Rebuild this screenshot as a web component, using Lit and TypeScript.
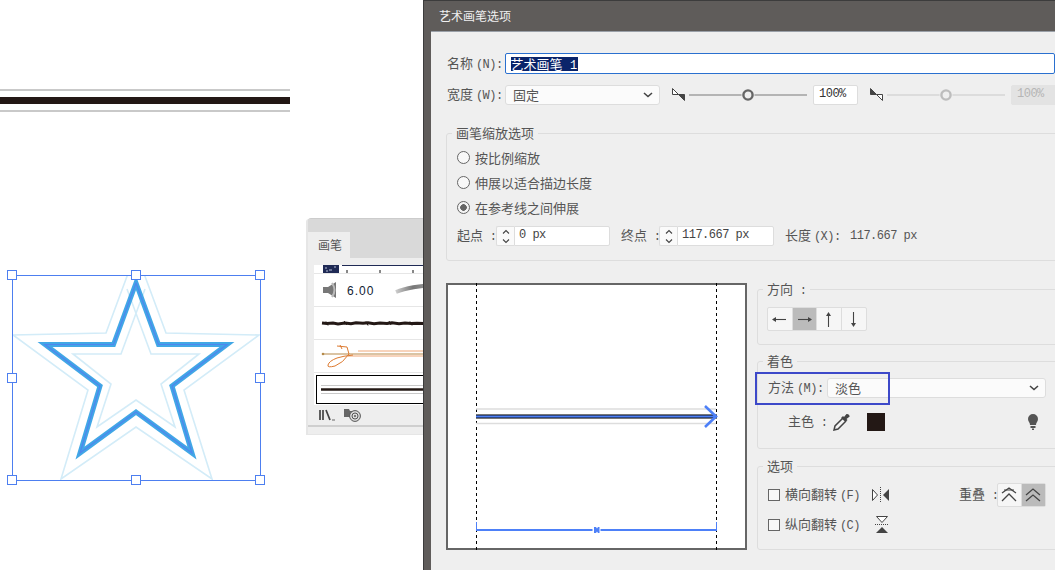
import { LitElement, html, css, svg } from 'lit';
import { customElement } from 'lit/decorators.js';

const chevron = html`<svg class="chev" width="10" height="6" viewBox="0 0 10 6"><path d="M1 1l4 3.5L9 1" fill="none" stroke="#444" stroke-width="1.6"/></svg>`;

const taper = (flip: boolean) => {
  const c = '#444';
  return html`<svg class="taper" width="13" height="14" viewBox="0 0 13 14">
    <path d="M.5.5v6h6z" fill=${flip ? c : '#fff'} stroke=${c}/>
    <path d="M6.5 6.5h6v6z" fill=${flip ? '#fff' : c} stroke=${c}/>
  </svg>`;
};

const slider = (line: string, knob: string) => html`<svg class="slider" width="118" height="14" viewBox="0 0 118 14">
  <path d="M0 7h118" stroke=${line} stroke-width="2"/>
  <circle cx="59" cy="7" r="6.5" fill="#efefef"/>
  <circle cx="59" cy="7" r="4.6" fill="#efefef" stroke=${knob} stroke-width="2.4"/>
</svg>`;

const spinner = html`<div class="spin"><svg width="10" height="17" viewBox="0 0 10 17">
  <path d="M2 5.500l3-3 3 3M2 11.500l3 3 3-3" fill="none" stroke="#444" stroke-width="1.1"/>
</svg></div>`;

// line + small filled head for the four direction buttons
const arrows = [
  ['M2 8.500h13', 'M1 8.500l4-2.500v5z'],
  ['M2 8.500h13', 'M16 8.500l-4-2.500v5z'],
  ['M8.500 3v13', 'M8.500 1l-2.500 4h5z'],
  ['M8.500 14V1', 'M8.500 16l-2.500-4h5z'],
];

const outerStar = 'M106 333L13 335L88 390L61 479L136 427L212 479L184 390L259 335L166 333L136 252Z';
const innerStar = 'M145 289L121 354H73L111 384L97 427L136 400L175 427L161 384L199 354H151L127 289';
const midStar = 'M136 283L113.500 344.500H45L100 386L80 453L136 412L192 453L172 386L227 344.500H158.500Z';
const handles = [[12, 275], [136, 275], [260, 275], [12, 378], [260, 378], [12, 480], [136, 480], [260, 480]];

@customElement('app-root')
export class AppRoot extends LitElement {
  static styles = css`
    :host {
      display: block;
      position: relative;
      width: 1055px;
      height: 570px;
      overflow: hidden;
      background: #fff;
      font-family: "Noto Sans CJK SC", "Liberation Sans", sans-serif;
      font-size: 13px;
      line-height: 16px;
      color: #555;
    }

    .art {
      position: absolute;
      inset: 0;
    }

    .lat {
      font-family: "Liberation Mono", monospace;
      font-size: 12px;
      letter-spacing: -0.5px;
    }

    /* brush panel */
    .panel {
      position: absolute;
      left: 308px;
      top: 218px;
      width: 130px;
      height: 216px;
      background: #eee;
      border-top: 1px solid #ccc;
      box-shadow: -2px 1px 0 #e6e6e6;
      box-sizing: border-box;
      display: flex;
      flex-direction: column;
      border-radius: 3px 0 0 0;
    }

    .panel-top {
      height: 13px;
      background: #d9d9d9;
    }

    .tabs {
      height: 26px;
      background: #d9d9d9;
      display: flex;
    }

    .tab {
      width: 42px;
      padding-left: 2px;
      box-sizing: border-box;
      background: #eee;
      font-size: 12px;
      color: #555;
      display: flex;
      align-items: center;
      justify-content: center;
    }

    .list {
      margin: 7px 0 0 6px;
      height: 140px;
      background: #fff;
      display: flex;
      flex-direction: column;
    }

    .brush {
      height: 33px;
      border-bottom: 1px solid #e6e6e6;
      box-sizing: border-box;
      flex: none;
    }

    .brush.first {
      height: 9px;
    }

    .brush.selected {
      height: 29px;
      margin: 2px 0 0 2px;
      border: 1.5px solid #000;
    }

    .brush svg {
      display: block;
    }

    .panel-foot {
      height: 22px;
      box-sizing: border-box;
      padding-left: 11px;
      display: flex;
      align-items: center;
      gap: 8px;
      border-bottom: 2px solid #cfcfcf;
    }

    .panel-foot svg {
      display: block;
    }

    /* dialog */
    .dialog {
      position: absolute;
      left: 423px;
      top: 0;
      width: 660px;
      height: 570px;
      background: #5f5c5a;
      border-top: 1px solid #3c3c3c;
      border-left: 1px solid #3c3c3c;
      box-sizing: border-box;
      display: flex;
      flex-direction: column;
    }

    .title {
      height: 30px;
      padding-left: 15px;
      display: flex;
      align-items: center;
      color: #f0f0f0;
      font-size: 12px;
    }

    .body {
      flex: 1;
      margin-left: 7px;
      padding: 21px 0 0 15px;
      background: #efefef;
      display: flex;
      flex-direction: column;
      border-top: 1px solid #9aa0a8;
    }

    .row {
      display: flex;
      align-items: center;
      white-space: nowrap;
    }

    .row > * {
      flex: none;
    }

    .row-label {
      width: 59px;
      white-space: pre;
      padding-left: 1px;
      box-sizing: border-box;
    }

    .name-field {
      flex: 1;
      height: 21px;
      margin-right: 28px;
      background: #fff;
      border: 1.5px solid #2a70cf;
      border-radius: 2px;
      box-sizing: border-box;
      padding-left: 4.500px;
      display: flex;
      align-items: center;
    }

    .name-field span.sel {
      background: #0a246a;
      color: #fff;
      height: 14px;
      line-height: 14px;
      white-space: pre;
    }

    .sel .lat {
      letter-spacing: 0.4px;
    }

    .select {
      height: 20px;
      background: #fbfbfb;
      border: 1px solid #ddd;
      border-radius: 3px;
      box-sizing: border-box;
      padding: 0 6px 0 7px;
      display: flex;
      align-items: center;
      justify-content: space-between;
    }

    .taper {
      margin-left: 12px;
    }

    .slider {
      margin-left: 4px;
    }

    .num {
      width: 45px;
      height: 20px;
      margin-left: 6px;
      background: #fff;
      border: 1px solid #ddd;
      border-radius: 2px;
      box-sizing: border-box;
      padding-left: 5px;
      line-height: 17px;
      color: #333;
    }

    .num.off {
      width: 60px;
      background: #e3e3e3;
      border-color: #e3e3e3;
      color: #b5b5b5;
    }

    .group {
      position: relative;
      border: 1px solid #ddd;
      border-radius: 3px;
      box-sizing: border-box;
      flex: none;
    }

    .legend {
      position: absolute;
      left: 5px;
      top: -10px;
      padding: 0 4px;
      background: #efefef;
      line-height: 18px;
    }

    .scale {
      width: 640px;
      height: 128px;
      margin-top: 28px;
      padding: 11px 0 0 10px;
    }

    .radio-row {
      height: 25px;
      display: flex;
      align-items: center;
      gap: 5px;
    }

    .radio {
      width: 13px;
      height: 13px;
      border: 1.5px solid #666;
      border-radius: 50%;
      background: #f8f8f8;
      box-sizing: border-box;
    }

    .radio.on {
      background: radial-gradient(circle, #666 0 3px, #f4f4f4 3.6px);
    }

    .range-row {
      height: 20px;
      margin-top: 6px;
    }

    .spin {
      width: 18px;
      height: 20px;
      background: #fafafa;
      border: 1px solid #ddd;
      border-right: 0;
      border-radius: 2px 0 0 2px;
      box-sizing: border-box;
      display: flex;
      align-items: center;
      justify-content: center;
    }

    .field {
      height: 20px;
      background: #fff;
      border: 1px solid #ddd;
      border-radius: 0 2px 2px 0;
      box-sizing: border-box;
      padding-left: 4px;
      line-height: 16px;
      color: #444;
    }

    .lower {
      display: grid;
      grid-template-columns: 301px 320px;
      column-gap: 10px;
      margin-top: 22px;
    }

    .preview {
      position: relative;
      height: 267px;
      background: #fff;
      border: 2px solid #666;
      box-sizing: border-box;
    }

    .preview svg {
      position: absolute;
      left: -2px;
      top: -2px;
    }

    .side {
      padding-top: 6px;
      display: flex;
      flex-direction: column;
    }

    .direction {
      height: 56px;
      padding: 17px 0 0 9px;
    }

    .seg {
      display: inline-flex;
      background: #f6f6f6;
      border: 1px solid #ddd;
      border-radius: 2px;
    }

    .seg-btn {
      width: 24.500px;
      height: 22px;
      box-sizing: border-box;
      border-right: 1px solid #ddd;
      display: flex;
      align-items: center;
      justify-content: center;
    }

    .seg-btn:last-child {
      border-right: 0;
    }

    .seg-btn.on {
      background: #bbb;
    }

    .seg.small .seg-btn {
      width: 23.500px;
    }

    .color {
      height: 88px;
      margin-top: 16px;
      padding: 16px 0 0 9px;
    }

    .method-label {
      width: 60px;
      padding-left: 1px;
      box-sizing: border-box;
      white-space: pre;
    }

    .main-row {
      margin-top: 15px;
      padding-left: 21px;
    }

    .main-row .swatch {
      width: 18px;
      height: 18px;
      margin-left: 17px;
      background: #231815;
    }

    .main-row .bulb {
      margin-left: 143px;
    }

    .options {
      height: 84px;
      margin-top: 17px;
      padding: 16px 0 0 10px;
    }

    .opt-row {
      height: 24px;
    }

    .opt-row.second {
      height: 20px;
      margin-top: 8px;
    }

    .check {
      width: 12px;
      height: 12px;
      margin-right: 5px;
      background: #f8f8f8;
      border: 1px solid #666;
      box-sizing: border-box;
    }

    .opt-label {
      width: 87px;
      white-space: pre;
    }

    .overlap-label {
      width: 38px;
      margin-left: 70px;
      white-space: pre;
    }

    .note {
      position: absolute;
      left: 755px;
      top: 372px;
      width: 135px;
      height: 33px;
      border: 2px solid #3d49c9;
      box-sizing: border-box;
    }
  `;

  private renderArt() {
    return html`<svg class="art" width="1055" height="570" viewBox="0 0 1055 570">
      <rect x="0" y="89" width="290" height="2" fill="#c9c9c9"/>
      <rect x="0" y="97" width="290" height="7" fill="#231815"/>
      <rect x="0" y="110" width="290" height="2" fill="#c9c9c9"/>
      <defs><clipPath id="box"><rect x="12" y="276" width="248" height="204"/></clipPath></defs>
      <g fill="none" clip-path="url(#box)" stroke-linejoin="miter" stroke-miterlimit="8">
        <path d=${outerStar} stroke="#d3ecf8" stroke-width="1.6"/>
        <path d=${innerStar} stroke="#d3ecf8" stroke-width="1.6"/>
        <path d=${midStar} stroke="#41a7e6" stroke-width="5"/>
        <path d=${midStar} stroke="#4f86ee" stroke-width="1.2"/>
      </g>
      <rect x="12.500" y="275.500" width="248" height="205" fill="none" stroke="#4d7ff0"/>
      ${handles.map(([x, y]) => svg`<rect x=${x - 4.5} y=${y - 4.5} width="9" height="9" fill="#fff" stroke="#4d7ff0"/>`)}
    </svg>`;
  }

  private renderPanel() {
    return html`<div class="panel">
      <div class="panel-top"></div>
      <div class="tabs"><div class="tab">画笔</div></div>
      <div class="list">
        <div class="brush first">
          <svg width="124" height="8" viewBox="0 0 124 8">
            <rect x="9" y="0" width="16" height="8" fill="#1f2a55"/>
            <path d="M11 3h2M15 5h3M20 2h2M12 6h2" stroke="#b9c0d8"/>
            <path d="M28 .5H124" stroke="#1f2a55"/>
            <path d="M33 5v3M66 5v3M99 5v3" stroke="#111"/>
          </svg>
        </div>
        <div class="brush">
          <svg width="124" height="32" viewBox="0 0 124 32">
            <path d="M9 13h5l8-5v16l-8-5H9z" fill="#777"/>
            <path d="M18 9q5 7 0 14" stroke="#bbb" fill="none" stroke-width="2"/>
            <text x="33" y="21" font-family="Liberation Sans" font-size="12" letter-spacing="1" fill="#123">6.00</text>
            <defs><linearGradient id="soft" x1="0" x2="1"><stop offset="0" stop-color="#ccc"/><stop offset="0.4" stop-color="#777"/><stop offset="1" stop-color="#aaa"/></linearGradient></defs>
            <path d="M82 18q14-6 42-7" stroke="url(#soft)" stroke-width="4" fill="none"/>
          </svg>
        </div>
        <div class="brush">
          <svg width="124" height="32" viewBox="0 0 124 32">
            <path d="M8 16l5 .5 6-.5 5 1 7-1 6 .8 5-1 7 .5 5-.6 6 1 6-.6 7 .4 5-.8 7 1 6-.7 6 .5 6-.3 7 .4" stroke="#231815" stroke-width="3" fill="none"/>
            <path d="M12 14.500l2 4M30 14l3 4M52 14.500l2 4M75 14l2 4M96 14.500l2 4" stroke="#231815" stroke-width="1"/>
          </svg>
        </div>
        <div class="brush">
          <svg width="124" height="32" viewBox="0 0 124 32">
            <path d="M8 14h116" stroke="#b58a4a" stroke-width="1.2"/>
            <path d="M44 11h80M34 16h90" stroke="#f0a878" stroke-width="1"/>
            <circle cx="9" cy="14" r="1.3" fill="#b58a4a"/>
            <path d="M23 6l10 1 2 7q-6 9-14 12-8 2-7-1 1-4 9-7 6-2 16-3M26 5l2 4" fill="none" stroke="#dd7a30" stroke-width="1"/>
          </svg>
        </div>
        <div class="brush selected">
          <svg width="122" height="26" viewBox="0 0 122 26">
            <path d="M4 9.500H122M4 17.500H122" stroke="#c9c9c9" stroke-width="1"/>
            <path d="M4 13.500H122" stroke="#231815" stroke-width="2.4"/>
          </svg>
        </div>
      </div>
      <div class="panel-foot">
        <svg width="17" height="13" viewBox="0 0 17 13"><path d="M1 1v10M4 1v10M7 1l4 10" stroke="#444" stroke-width="1.7" fill="none"/><path d="M13 11h3" stroke="#666"/></svg>
        <svg width="18" height="14" viewBox="0 0 18 14">
          <path d="M0 1h5l1 2h5v6H0z" fill="#666"/>
          <circle cx="11" cy="8" r="5.400" fill="#ddd" stroke="#555"/>
          <circle cx="11" cy="8" r="3" fill="none" stroke="#555"/>
          <circle cx="11" cy="8" r="1" fill="#555"/>
        </svg>
      </div>
    </div>`;
  }

  private renderPreview() {
    return html`<div class="preview">
      <svg width="301" height="267" viewBox="446 283 301 267">
        <path d="M476.500 283v267M716.500 283v267" stroke="#000" stroke-dasharray="3 3"/>
        <path d="M476 409H716M476 423.500H716" stroke="#ddd" stroke-width="1.500"/>
        <rect x="476" y="414" width="241" height="5" fill="#777"/>
        <rect x="476" y="415" width="241" height="3" fill="#111"/>
        <path d="M476 416.500H716" stroke="#4d80f8" stroke-width="1.800"/>
        <path d="M705 406l11 10.500-11 10.500" fill="none" stroke="#4d80f8" stroke-width="2.600"/>
        <path d="M476.500 522v8.500M716.500 522v8.500" stroke="#4d80f8"/>
        <path d="M476 530H592.500M600.500 530H717" stroke="#4d80f8" stroke-width="2"/>
        <path d="M594 527h2l1 1.500 1-1.500h1.500v6h-1.500l-1-1.500-1 1.500h-2z" fill="#4d80f8"/>
      </svg>
    </div>`;
  }

  render() {
    return html`
      ${this.renderArt()}
      ${this.renderPanel()}
      <div class="dialog">
        <div class="title">艺术画笔选项</div>
        <div class="body">
          <div class="row">
            <div class="row-label">名称 <span class="lat">(N):</span></div>
            <div class="name-field"><span class="sel">艺术画笔<span class="lat"> 1</span></span></div>
          </div>
          <div class="row" style="margin-top: 11px">
            <div class="row-label">宽度 <span class="lat">(W):</span></div>
            <div class="select" style="width: 155px"><span>固定</span>${chevron}</div>
            ${taper(false)}
            ${slider('#b4b4b4', '#666')}
            <div class="num lat">100%</div>
            ${taper(true)}
            ${slider('#dcdcdc', '#bdbdbd')}
            <div class="num off lat">100%</div>
          </div>

          <div class="group scale">
            <div class="legend">画笔缩放选项</div>
            <div class="radio-row"><div class="radio"></div>按比例缩放</div>
            <div class="radio-row"><div class="radio"></div>伸展以适合描边长度</div>
            <div class="radio-row"><div class="radio on"></div>在参考线之间伸展</div>
            <div class="row range-row">
              <div style="width: 39px">起点<span class="lat"> :</span></div>
              ${spinner}
              <div class="field lat" style="width: 96px">0 px</div>
              <div style="width: 38px; margin-left: 11px">终点<span class="lat"> :</span></div>
              ${spinner}
              <div class="field lat" style="width: 97px">117.667 px</div>
              <div style="width: 65px; margin-left: 11px">长度 <span class="lat">(X):</span></div>
              <div class="lat">117.667 px</div>
            </div>
          </div>

          <div class="lower">
            ${this.renderPreview()}
            <div class="side">
              <div class="group direction">
                <div class="legend">方向<span class="lat"> :</span></div>
                <div class="seg">
                  ${arrows.map(([line, head], i) => html`<div class="seg-btn ${i === 1 ? 'on' : ''}">
                    <svg width="17" height="17" viewBox="0 0 17 17"><path d=${line} stroke="#444" stroke-width="1.100"/><path d=${head} fill="#444"/></svg>
                  </div>`)}
                </div>
              </div>

              <div class="group color">
                <div class="legend">着色</div>
                <div class="row">
                  <div class="method-label">方法 <span class="lat">(M):</span></div>
                  <div class="select" style="width: 219px"><span>淡色</span>${chevron}</div>
                </div>
                <div class="row main-row">
                  <div style="width: 45px">主色<span class="lat"> :</span></div>
                  <svg width="17" height="18" viewBox="0 0 17 18">
                    <path d="M10 5L2 13l-1 4 4-1 8-8" fill="#f4f4f4" stroke="#444" stroke-width="1.500"/>
                    <path d="M8 5l2-2 1 1 2.500-3q3-.5 3.200 2.500L13.500 6l1 1-2 2z" fill="#444"/>
                  </svg>
                  <div class="swatch"></div>
                  <svg class="bulb" width="10" height="16" viewBox="0 0 10 16">
                    <path d="M5 0a5 5 0 0 1 5 5c0 2.500-2 3.500-2 6H2c0-2.500-2-3.500-2-6a5 5 0 0 1 5-5z" fill="#555"/>
                    <path d="M2.500 12h5v2h-5zM4 14.500h2V16H4z" fill="#555"/>
                  </svg>
                </div>
              </div>

              <div class="group options">
                <div class="legend">选项</div>
                <div class="row opt-row">
                  <div class="check"></div>
                  <div class="opt-label">横向翻转 <span class="lat">(F)</span></div>
                  <svg width="17" height="16" viewBox="0 0 17 16">
                    <path d="M8.500 0v16" stroke="#444" stroke-dasharray="1 1"/>
                    <path d="M.5 2.500l5 5.500-5 5.500z" fill="#fff" stroke="#444"/>
                    <path d="M17 2v12L11 8z" fill="#444"/>
                  </svg>
                  <div class="overlap-label">重叠<span class="lat"> :</span></div>
                  <div class="seg small">
                    <div class="seg-btn">
                      <svg width="16" height="16" viewBox="0 0 16 16"><path d="M1 14l7-7 7 7M1 6l7-5 7 5" fill="none" stroke="#444" stroke-width="1.300"/><path d="M3 3h10" stroke="#444"/></svg>
                    </div>
                    <div class="seg-btn on">
                      <svg width="16" height="16" viewBox="0 0 16 16"><path d="M1 14l7-6 7 6M1 8l7-6 7 6" fill="none" stroke="#444" stroke-width="1.300"/></svg>
                    </div>
                  </div>
                </div>
                <div class="row opt-row second">
                  <div class="check"></div>
                  <div class="opt-label">纵向翻转 <span class="lat">(C)</span></div>
                  <svg style="margin-left: 3px" width="14" height="18" viewBox="0 0 14 18">
                    <path d="M0 8.500h14" stroke="#444" stroke-dasharray="1 1"/>
                    <path d="M1.500 .5h11L7 6.500z" fill="#fff" stroke="#444"/>
                    <path d="M1 17l6-6 6 6z" fill="#444"/>
                  </svg>
                </div>
              </div>
            </div>
          </div>
        </div>
      </div>
      <div class="note"></div>
    `;
  }
}
